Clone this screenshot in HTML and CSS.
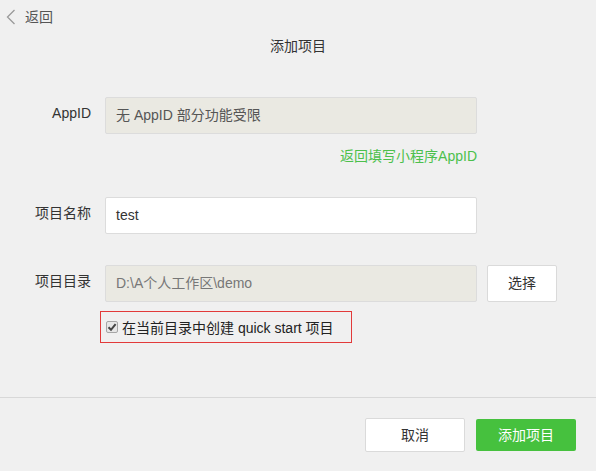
FILE: index.html
```html
<!DOCTYPE html>
<html lang="zh">
<head>
<meta charset="utf-8">
<link rel="stylesheet" href="styles.css">
</head>
<body>
<div class="page">
  <div class="back">
    <svg class="chev" width="10" height="16" viewBox="0 0 10 16"><path d="M8.5 1 L1.5 8 L8.5 15" fill="none" stroke="#9a9a9a" stroke-width="1.3"/></svg>
    <span>返回</span>
  </div>
  <div class="title">添加项目</div>

  <div class="form">
    <div class="row row-appid">
      <div class="label">AppID</div>
      <div class="field disabled">无 AppID 部分功能受限</div>
    </div>
    <div class="link-row"><span class="link">返回填写小程序AppID</span></div>

    <div class="row row-name">
      <div class="label">项目名称</div>
      <div class="field">test</div>
    </div>

    <div class="row row-dir">
      <div class="label">项目目录</div>
      <div class="field disabled path">D:\A个人工作区\demo</div>
      <div class="btn choose">选择</div>
    </div>

    <div class="check-row">
      <div class="check-box">
        <span class="cb"><svg width="10" height="10" viewBox="0 0 10 10"><path d="M1.5 5.2 L4 7.8 L8.6 2.2" fill="none" stroke="#444" stroke-width="2"/></svg></span>
        <span>在当前目录中创建 quick start 项目</span>
      </div>
    </div>
  </div>

  <div class="footer">
    <div class="btn cancel">取消</div>
    <div class="btn primary">添加项目</div>
  </div>
</div>
</body>
</html>
```

FILE: styles.css
```css
html, body {
  margin: 0;
  padding: 0;
}
body {
  background: #f0f0f0;
  font-family: "Liberation Sans", "Noto Sans CJK SC", sans-serif;
  font-size: 14px;
  color: #333;
}
.page {
  width: 596px;
  height: 471px;
  display: flex;
  flex-direction: column;
}
.back {
  display: flex;
  align-items: center;
  gap: 9px;
  padding: 7px 0 0 6px;
  height: 20px;
  line-height: 20px;
  color: #555;
}
.chev { display: block; }
.title {
  margin-top: 9px;
  text-align: center;
  line-height: 20px;
  color: #333;
}
.form {
  display: flex;
  flex-direction: column;
}
.row {
  display: flex;
  align-items: flex-start;
}
.row-appid { margin-top: 41px; }
.row-name { margin-top: 31px; }
.row-dir { margin-top: 31px; }
.label {
  width: 91px;
  margin-right: 14px;
  text-align: right;
  line-height: 20px;
  padding-top: 6px;
  color: #333;
}
.field {
  box-sizing: border-box;
  width: 372px;
  height: 37px;
  border: 1px solid #dcdcdc;
  border-radius: 2px;
  background: #fff;
  padding: 0 10px;
  line-height: 35px;
  color: #333;
}
.field.disabled {
  background: #eae9e2;
  color: #555;
}
.field.path { color: #777; }
.link-row {
  width: 477px;
  margin-top: 12px;
  text-align: right;
  line-height: 20px;
}
.link { color: #4cc04c; }
.btn {
  box-sizing: border-box;
  border: 1px solid #dadada;
  border-radius: 2px;
  background: #fff;
  text-align: center;
  color: #333;
}
.choose {
  width: 70px;
  height: 37px;
  line-height: 35px;
  margin-left: 10px;
}
.check-row {
  margin-top: 9px;
  padding-left: 100px;
}
.check-box {
  box-sizing: border-box;
  width: 252px;
  height: 32px;
  border: 1px solid #e23a3a;
  display: flex;
  align-items: center;
  gap: 4px;
  padding-left: 5px;
  color: #222;
}
.cb {
  box-sizing: border-box;
  width: 12px;
  height: 12px;
  border: 1px solid #a6a6a6;
  border-radius: 2px;
  background: #e6e6e6;
  display: flex;
  align-items: center;
  justify-content: center;
}
.cb svg { display: block; }
.footer {
  margin-top: auto;
  height: 74px;
  box-sizing: border-box;
  border-top: 1px solid #d8d8d8;
  padding: 20px 20px 0 0;
  display: flex;
  justify-content: flex-end;
  align-items: flex-start;
  gap: 11px;
}
.cancel {
  width: 100px;
  height: 34px;
  line-height: 32px;
}
.primary {
  width: 100px;
  height: 32px;
  line-height: 32px;
  margin-top: 1px;
  background: #46c13e;
  border: none;
  color: #fff;
}
```
